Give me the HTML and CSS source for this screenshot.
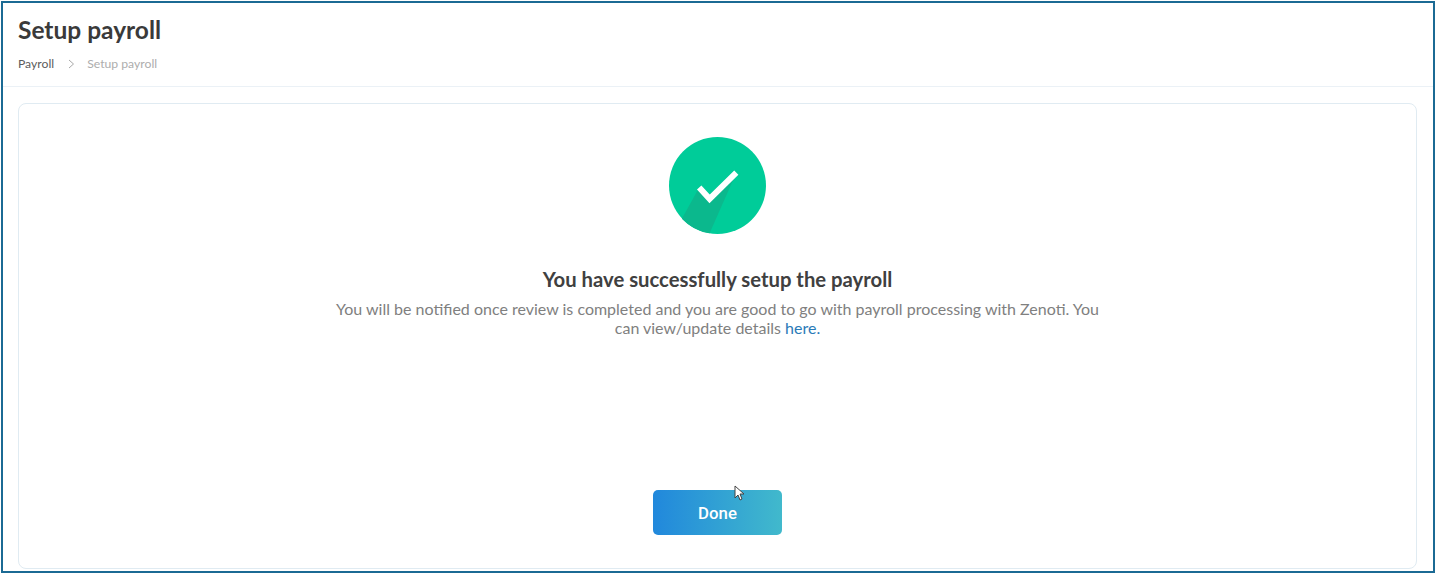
FILE: index.html
```html
<!DOCTYPE html>
<html lang="en">
<head>
    <meta charset="UTF-8">
    <title>Setup payroll</title>
    <link rel="stylesheet" href="styles.css">
</head>
<body>
    <div class="frame">
        <header class="page-header">
            <h1>Setup payroll</h1>
            <nav class="breadcrumb">
                <span class="crumb">Payroll</span>
                <svg class="crumb-sep" width="7" height="10" viewBox="0 0 7 10"><path d="M1 1l4.500 4-4.500 4" fill="none" stroke="#a9a9a9" stroke-width="1"/></svg>
                <span class="crumb current">Setup payroll</span>
            </nav>
        </header>
        <main class="card">
            <svg class="success-icon" width="97" height="97" viewBox="0 0 98 98">
                <circle cx="49" cy="49" r="49" fill="#00cc99"/>
                <path d="M30.500 51L41 62.500L68 36L41 97.300A49 49 0 0 1 13 82.500Z" fill="#0bb88d"/>
                <path d="M30.500 51L41 62.500L68 36" fill="none" stroke="#fff" stroke-width="6"/>
            </svg>
            <h2>You have successfully setup the payroll</h2>
            <p class="message">You will be notified once review is completed and you are good to go with payroll processing with Zenoti. You can view/update details <a href="#">here.</a></p>
            <button class="done-btn">Done</button>
            <svg class="cursor" width="12" height="17" viewBox="0 0 12 17"><path d="M1 1v12l3-3 2 5 2-1-2-5h4z" fill="#fff" stroke="#444" stroke-width="1"/></svg>
        </main>
    </div>
</body>
</html>
```
FILE: styles.css
```css
html, body {
    margin: 0;
    padding: 0;
    background: #fff;
}
body {
    font-family: Lato, Arial, sans-serif;
    color: #3c3c3c;
}
.frame {
    box-sizing: border-box;
    width: 1434px;
    height: 572px;
    margin: 1px;
    border: 2px solid #1b6a94;
    display: flex;
    flex-direction: column;
}
.page-header {
    height: 83px;
    padding: 0 15px;
    border-bottom: 1px solid #ebf1f6;
}
h1 {
    margin: 12px 0 0;
    font-size: 24.500px;
    line-height: 29px;
    font-weight: 700;
    color: #3a3a3a;
}
.breadcrumb {
    margin-top: 12px;
    display: flex;
    align-items: center;
    font-size: 12.200px;
    line-height: 15px;
}
.crumb {
    color: #5c5c5c;
}
.crumb.current {
    color: #adadad;
}
.crumb-sep {
    margin: 0 12px 0 14px;
}
.card {
    position: relative;
    box-sizing: border-box;
    flex: 1;
    margin: 16px 16px 2px 15px;
    border: 1px solid #e0ebf2;
    border-radius: 8px;
    display: flex;
    flex-direction: column;
    align-items: center;
    text-align: center;
}
.success-icon {
    margin-top: 33px;
}
h2 {
    margin: 33px 0 0;
    font-size: 20.300px;
    line-height: 24px;
    font-weight: 700;
    color: #404040;
}
.message {
    width: 780px;
    margin: 8px 0 0;
    font-size: 16px;
    line-height: 19px;
    color: #808080;
}
.message a {
    color: #2a7ab8;
    text-decoration: none;
}
.done-btn {
    margin-top: 153px;
    width: 129px;
    height: 45px;
    padding: 1px 0 0;
    border: 0;
    border-radius: 5px;
    background: linear-gradient(90deg, #2188dc, #41b9cc);
    color: #fff;
    font-family: Roboto, Arial, sans-serif;
    font-size: 16.800px;
    font-weight: 500;
}
.cursor {
    position: absolute;
    left: 715px;
    top: 381px;
}
```
